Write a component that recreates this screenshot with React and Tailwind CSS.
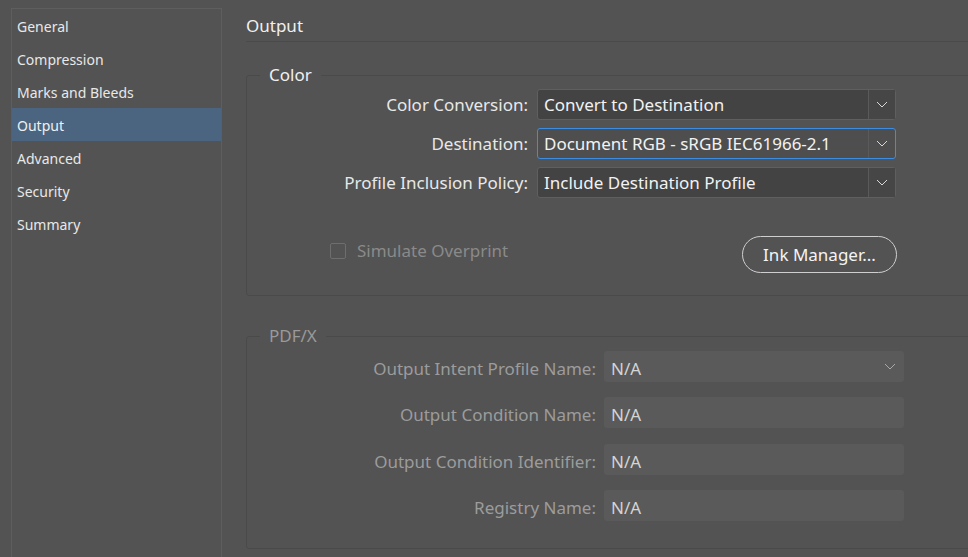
import React from "react";

const Chevron = ({ className = "" }) => (
  <svg width="12" height="7" viewBox="0 0 12 7" className={className} fill="none">
    <polyline points="1,1 6,6 11,1" stroke="currentColor" strokeWidth="1" />
  </svg>
);

const Select = ({ value, focused }) => (
  <div
    className={`flex h-[31px] w-[359px] rounded-[3px] border ${
      focused ? "border-[#3b8ce3] bg-[#4e4e4e]" : "border-[#5f5f5f] bg-[#434343]"
    }`}
  >
    <div className="flex flex-1 items-center pl-[6px] text-[17px] text-[#f2f2f2]">{value}</div>
    <div
      className={`flex w-[27px] items-center justify-center border-l ${
        focused ? "border-[#5a5a5a]" : "border-[#5a5a5a] bg-[#464646]"
      } text-[#d8d8d8]`}
    >
      <Chevron />
    </div>
  </div>
);

const Field = ({ label, dropdown, className = "" }) => (
  <div className={`flex items-center ${className}`}>
    <div className="w-[357px] pr-[8px] pt-[4px] text-right text-[17px] text-[#9c9c9c]">{label}</div>
    <div className="flex h-[31px] w-[300px] items-center justify-between rounded-[3px] bg-[#5a5a5a] pl-[7px] pr-[8px] text-[17px] text-[#d4d4d4]">
      <span className="pt-[4px]">N/A</span>
      {dropdown && <Chevron className="text-[#a8a8a8]" />}
    </div>
  </div>
);

export default function App() {
  const items = ["General", "Compression", "Marks and Bleeds", "Output", "Advanced", "Security", "Summary"];
  return (
    <div
      className="flex h-[557px] w-[968px] overflow-hidden bg-[#535353] text-[#e8e8e8]"
      style={{ fontFamily: '"Noto Sans", "Open Sans", sans-serif' }}
    >
      <div className="ml-[11px] mt-[8px] h-[600px] w-[211px] shrink-0 border border-[#5e5e5e]">
        {items.map((it) => (
          <div
            key={it}
            className={`flex h-[33px] items-center pl-[5px] pt-[1px] text-[14px] ${
              it === "Output" ? "bg-[#4b6580] text-[#f0f0f0]" : "text-[#e8e8e8]"
            }`}
          >
            {it}
          </div>
        ))}
      </div>
      <div className="ml-[24px] flex w-[740px] shrink-0 flex-col pt-[10px]">
        <div className="flex h-[32px] items-center border-b border-[#4a4a4a] text-[17px] text-[#f0f0f0]">
          Output
        </div>
        <div className="relative mt-[33px] rounded-[3px] border border-[#4a4a4a] pb-[22px] pt-[13px]">
          <span className="absolute left-[13px] top-[-12px] bg-[#535353] px-[9px] text-[17px] leading-[22px] text-[#f0f0f0]">
            Color
          </span>
          <div className="flex flex-col gap-[8px]">
            {[
              ["Color Conversion:", "Convert to Destination", false],
              ["Destination:", "Document RGB - sRGB IEC61966-2.1", true],
              ["Profile Inclusion Policy:", "Include Destination Profile", false],
            ].map(([l, v, f]) => (
              <div key={l} className="flex items-center">
                <div className="w-[290px] pr-[9px] text-right text-[17px] text-[#e8e8e8]">{l}</div>
                <Select value={v} focused={f} />
              </div>
            ))}
          </div>
          <div className="mt-[38px] flex items-center">
            <div className="mb-[7px] ml-[83px] flex w-[412px] items-center">
              <div className="h-[16px] w-[16px] rounded-[2px] border border-[#6e6e6e]" />
              <span className="ml-[11px] text-[17px] text-[#8a8a8a]">Simulate Overprint</span>
            </div>
            <button className="flex h-[37px] w-[155px] items-center justify-center rounded-full border border-[#cfcfcf] text-[17px] text-[#f4f4f4]">
              Ink Manager...
            </button>
          </div>
        </div>
        <div className="relative mt-[40px] rounded-[3px] border border-[#4a4a4a] pb-[27px] pt-[14px]">
          <span className="absolute left-[13px] top-[-12px] bg-[#535353] px-[9px] text-[17px] leading-[22px] text-[#9a9a9a]">
            PDF/X
          </span>
          <div className="flex flex-col">
            <Field label="Output Intent Profile Name:" dropdown />
            <Field label="Output Condition Name:" className="mt-[15px]" />
            <Field label="Output Condition Identifier:" className="mt-[16px]" />
            <Field label="Registry Name:" className="mt-[15px]" />
          </div>
        </div>
      </div>
    </div>
  );
}
